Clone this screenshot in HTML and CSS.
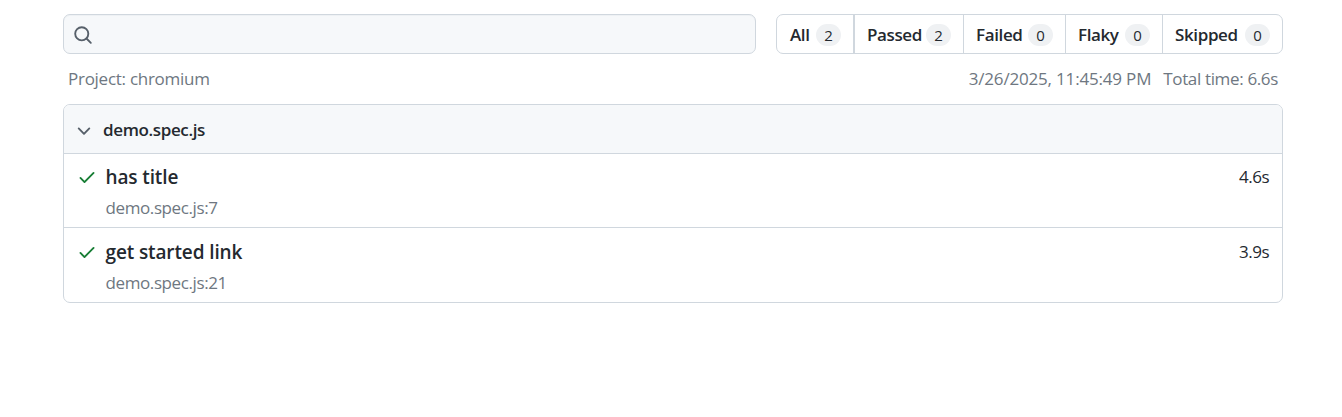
FILE: index.html
```html
<!DOCTYPE html>
<html lang="en">
<head>
<meta charset="utf-8">
<title>Playwright Test Report</title>
<link rel="stylesheet" href="styles.css">
</head>
<body>
<main class="report">
  <header class="toolbar">
    <div class="search">
      <svg class="search-icon" viewBox="0 0 16 16" width="20" height="20"><circle cx="7" cy="7" r="5.25"/><path d="M10.8 10.8 14.25 14.25"/></svg>
    </div>
    <nav class="tabs">
      <a class="tab tab-all"><span class="tab-label">All</span><span class="counter">2</span></a>
      <a class="tab tab-passed"><span class="tab-label">Passed</span><span class="counter">2</span></a>
      <a class="tab tab-failed"><span class="tab-label">Failed</span><span class="counter">0</span></a>
      <a class="tab tab-flaky"><span class="tab-label">Flaky</span><span class="counter">0</span></a>
      <a class="tab tab-skipped"><span class="tab-label">Skipped</span><span class="counter">0</span></a>
    </nav>
  </header>
  <div class="meta">
    <span class="project">Project: chromium</span>
    <span class="date">3/26/2025, 11:45:49 PM</span>
    <span class="total">Total time: 6.6s</span>
  </div>
  <section class="file">
    <div class="file-head">
      <svg class="chevron" viewBox="0 0 16 16" width="20" height="20"><path d="M12.78 6.22a.75.75 0 0 1 0 1.06l-4.25 4.25a.75.75 0 0 1-1.06 0L3.22 7.28a.75.75 0 0 1 1.06-1.06L8 9.94l3.72-3.72a.75.75 0 0 1 1.06 0Z"/></svg>
      <span class="file-name">demo.spec.js</span>
    </div>
    <article class="test">
      <svg class="check" viewBox="0 0 16 16" width="20" height="20"><path d="M13.78 4.22a.75.75 0 0 1 0 1.06l-7.25 7.25a.75.75 0 0 1-1.06 0L2.22 9.28a.75.75 0 0 1 1.06-1.06L6 10.94l6.72-6.72a.75.75 0 0 1 1.06 0Z"/></svg>
      <div class="test-body">
        <div class="test-title">has title</div>
        <div class="test-path">demo.spec.js:7</div>
      </div>
      <span class="duration">4.6s</span>
    </article>
    <article class="test">
      <svg class="check" viewBox="0 0 16 16" width="20" height="20"><path d="M13.78 4.22a.75.75 0 0 1 0 1.06l-7.25 7.25a.75.75 0 0 1-1.06 0L2.22 9.28a.75.75 0 0 1 1.06-1.06L6 10.94l6.72-6.72a.75.75 0 0 1 1.06 0Z"/></svg>
      <div class="test-body">
        <div class="test-title">get started link</div>
        <div class="test-path">demo.spec.js:21</div>
      </div>
      <span class="duration">3.9s</span>
    </article>
  </section>
</main>
</body>
</html>
```
FILE: styles.css
```css
* { box-sizing: border-box; }
body {
  margin: 0;
  background: #fff;
  color: #24292f;
  font-family: "Open Sans", "Noto Sans", sans-serif;
  font-size: 17px;
  line-height: 24px;
}
svg { display: block; flex: none; fill: #57606a; }
.report { width: 1220px; margin-left: 63px; padding-top: 14px; }
.toolbar { display: flex; gap: 20px; height: 40px; }
.search {
  flex: 1;
  display: flex;
  align-items: center;
  padding-left: 9px;
  border: 1px solid #d0d7de;
  border-radius: 7px;
  background: #f6f8fa;
  box-shadow: inset 0 1px 0 rgba(208, 215, 222, 0.2);
}
.search-icon {
  margin-top: 2px;
  fill: none;
  stroke: #57606a;
  stroke-width: 1.5;
  stroke-linecap: round;
}
.tabs {
  display: flex;
  width: 507px;
  border: 1px solid #d0d7de;
  border-radius: 7px;
}
.tab {
  display: flex;
  align-items: center;
  justify-content: space-between;
  padding: 0 12px;
  font-weight: 600;
  letter-spacing: -0.38px;
  border-right: 1px solid #d0d7de;
}
.tab-label { margin-top: 1px; }
.tab-all { width: 78px; padding-left: 13px; border-right-width: 2px; }
.tab-passed { width: 109px; }
.tab-failed { width: 102px; }
.tab-flaky { width: 97px; }
.tab-skipped { flex: 1; border-right: 0; }
.counter {
  width: 25px;
  height: 22px;
  margin-top: 2px;
  border-radius: 11px;
  background: #eff1f3;
  font-size: 15px;
  font-weight: 500;
  line-height: 22px;
  letter-spacing: 0;
  text-align: center;
}
.meta {
  display: flex;
  gap: 12px;
  height: 50px;
  padding: 13px 5px 0;
  color: #6e7781;
  letter-spacing: -0.27px;
}
.date { letter-spacing: -0.18px; }
.total { letter-spacing: -0.35px; }
.project { margin-right: auto; }
.file { border: 1px solid #d0d7de; border-radius: 7px; overflow: hidden; }
.file-head {
  display: flex;
  align-items: center;
  gap: 9px;
  height: 48px;
  padding-left: 10px;
  background: #f6f8fa;
  font-weight: 600;
  letter-spacing: -0.37px;
}
.file-name { margin-top: 2px; }
.chevron { margin-top: 2px; }
.test {
  display: flex;
  height: 74px;
  padding: 11px 13px 0 13px;
  border-top: 1px solid #d0d7de;
}
.test + .test { height: 75px; padding-top: 12px; }
.check { margin-top: 2px; fill: #1a7f37; }
.test-body { flex: 1; padding-left: 8.5px; }
.test-title { font-size: 19px; font-weight: 600; letter-spacing: -0.12px; }
.test-path { margin-top: 7px; color: #6e7781; letter-spacing: -0.4px; }
.duration { letter-spacing: -0.5px; }
```
